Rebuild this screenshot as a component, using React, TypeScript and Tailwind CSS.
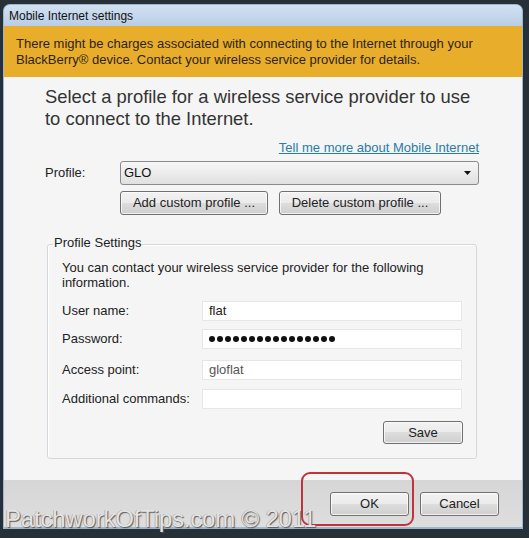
import React from 'react';

const btn =
  'flex items-center justify-center rounded-[3px] border border-[#707070] bg-[linear-gradient(#f2f2f2_0%,#ebebeb_50%,#dddddd_50%,#cfcfcf_100%)] shadow-[inset_0_0_0_1px_rgba(255,255,255,0.7)] text-[13px] text-[#222]';

const fields = [
  { label: 'User name:', value: 'flat', mt: 'mt-[11px]' },
  { label: 'Password:', value: '', mt: 'mt-[8px]', secret: 16 },
  { label: 'Access point:', value: 'gloflat', mt: 'mt-[11px]', dim: true },
  { label: 'Additional commands:', value: '', mt: 'mt-[9px]' },
];

const App: React.FC = () => {
  return (
    <div className="relative w-[529px] h-[538px] overflow-hidden bg-[#263036] pt-[4px] pl-[3px] font-['Liberation_Sans',Arial,sans-serif]">
      {/* Dialog window */}
      <div className="flex flex-col w-[520px] h-[525px] rounded-t-[7px] overflow-hidden border-x border-t border-b-2 border-[#9db4cb] bg-[#c6d8ea]">
        <div className="h-[21px] flex items-center pl-[5px] text-[12px] text-[#111] bg-[linear-gradient(#d2e1f1,#b8cee6)]">
          Mobile Internet settings
        </div>

        <div className="h-[51px] bg-[#e8ad2b] pl-[12px] pt-[10px] text-[13px] leading-[16px] text-[#2e2414]">
          There might be charges associated with connecting to the Internet through your
          <br />
          BlackBerry® device. Contact your wireless service provider for details.
        </div>

        <div className="h-[403px] flex flex-col bg-[#f5f5f5] pl-[41px] pr-[43px] pt-[9px]">
          <h1 className="text-[18.4px] leading-[22px] text-[#333]">
            Select a profile for a wireless service provider to use
            <br />
            to connect to the Internet.
          </h1>

          <a className="self-end mt-[10px] text-[13px] leading-[16px] text-[#2b7bab] underline cursor-pointer">
            Tell me more about Mobile Internet
          </a>

          <div className="mt-[5px] flex items-center">
            <span className="w-[75px] text-[13px] text-[#222]">Profile:</span>
            <div className="flex-1 h-[24px] flex items-center justify-between rounded-[3px] border border-[#8a8a8a] bg-[linear-gradient(#f7f7f7,#e0e0e0)] pl-[3px] pr-[7px] text-[13px] text-[#111]">
              <span>GLO</span>
              <svg width="7" height="4" viewBox="0 0 7 4">
                <path d="M0 0h7L3.5 4z" fill="#111" />
              </svg>
            </div>
          </div>

          <div className="mt-[6px] ml-[75px] flex gap-[11px]">
            <button className={`${btn} w-[148px] h-[24px] border-[#3c7fb1] shadow-[inset_0_0_0_1px_#9fd3f0]`}>
              Add custom profile ...
            </button>
            <button className={`${btn} w-[162px] h-[24px]`}>Delete custom profile ...</button>
          </div>

          {/* Profile Settings group */}
          <div className="mt-[29px] mx-[2px] flex flex-col rounded-[3px] border border-[#d3d8dc] shadow-[inset_1px_1px_0_#fff] px-[14px] pb-[14px]">
            <span className="-mt-[10px] ml-[-9px] w-fit px-[1px] bg-[#f5f5f5] text-[13px] leading-[16px] text-[#222]">
              Profile Settings
            </span>
            <p className="mt-[9px] text-[13px] leading-[15px] text-[#222]">
              You can contact your wireless service provider for the following
              <br />
              information.
            </p>

            {fields.map((f) => (
              <div key={f.label} className={`${f.mt} flex items-center`}>
                <span className="w-[140px] text-[13px] text-[#222]">{f.label}</span>
                <div
                  className={`w-[260px] h-[20px] flex items-center bg-white border border-[#e4e6e8] pl-[6px] text-[13px] ${
                    f.dim ? 'text-[#555]' : 'text-[#222]'
                  }`}
                >
                  {f.secret ? (
                    <div className="flex gap-[2px]">
                      {Array.from({ length: f.secret }).map((_, i) => (
                        <span key={i} className="w-[6px] h-[6px] rounded-full bg-[#111]" />
                      ))}
                    </div>
                  ) : (
                    f.value
                  )}
                </div>
              </div>
            ))}

            <button className={`${btn} self-end mt-[12px] mr-[-1px] w-[80px] h-[23px]`}>Save</button>
          </div>
        </div>

        <div className="h-[47px] flex justify-end items-start gap-[11px] pt-[12px] pr-[23px] bg-[linear-gradient(#d6d6d6,#dedede)]">
          <button className={`${btn} w-[79px] h-[24px]`}>OK</button>
          <button className={`${btn} w-[79px] h-[24px]`}>Cancel</button>
        </div>
      </div>

      {/* Annotation + watermark */}
      <div className="absolute left-[301px] top-[472px] w-[113px] h-[54px] rounded-[9px] border-2 border-[#c0323c]" />
      <div className="absolute left-[5px] top-[507px] text-[24px] leading-[24px] tracking-[-0.2px] text-[#e4e4e4] [text-shadow:1px_1px_1px_#5a5a5a,-0.5px_-0.5px_0_#9a9a9a] whitespace-nowrap">
        PatchworkOfTips.com © 2011
      </div>
    </div>
  );
};

export default App;
